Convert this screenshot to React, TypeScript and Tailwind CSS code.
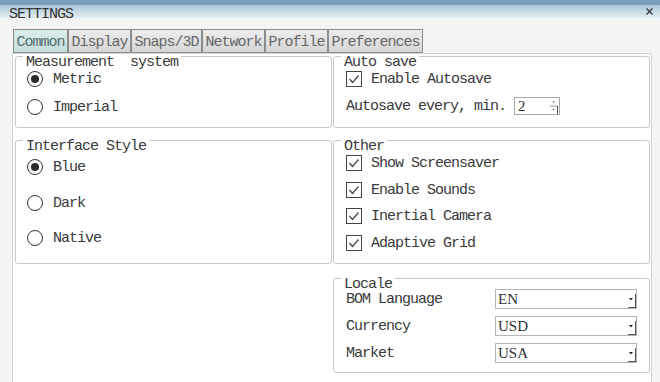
import type { ReactNode } from 'react';

const mono = "font-['Liberation_Mono',monospace] text-[15px] tracking-[-1px]";

function Radio({ checked }: { checked?: boolean }) {
  return (
    <span className="w-[16px] h-[16px] rounded-full border-[1.5px] border-[#333] bg-white flex items-center justify-center shrink-0">
      {checked && <span className="w-[8px] h-[8px] rounded-full bg-[#2a2a2a]" />}
    </span>
  );
}

function Check() {
  return (
    <span className="w-[16px] h-[16px] border-[1.5px] border-[#444] bg-white flex items-center justify-center shrink-0">
      <svg width="12" height="12" viewBox="0 0 12 12">
        <polyline points="1.5,6 4.5,9.5 10.5,2.5" fill="none" stroke="#444" strokeWidth="1.2" />
      </svg>
    </span>
  );
}

function GroupBox({ title, className, children }: { title: string; className: string; children: ReactNode }) {
  return (
    <div className={`border border-[#c8c8c8] rounded-[3px] bg-white ${className}`}>
      <div className="-mt-px pl-[7px] h-[13px] leading-[14px]">
        <span className="bg-white px-[3px] text-[#3a3a3a] whitespace-pre">{title}</span>
      </div>
      {children}
    </div>
  );
}

function RadioRow({ label, checked }: { label: string; checked?: boolean }) {
  return (
    <div className="h-[20px] flex items-center gap-[10px] pl-[11px]">
      <Radio checked={checked} />
      <span className="pt-[3px] text-[#3a3a3a]">{label}</span>
    </div>
  );
}

function CheckRow({ label }: { label: string }) {
  return (
    <div className="h-[20px] flex items-center gap-[9px] pl-[12px]">
      <Check />
      <span className="pt-[3px] text-[#3a3a3a]">{label}</span>
    </div>
  );
}

function Select({ value }: { value: string }) {
  return (
    <div className="w-[142px] h-[20px] border border-[#b4b4b4] bg-white flex items-center">
      <span className="pl-[2px] pt-[1px] font-['Liberation_Serif',serif] text-[15px] tracking-normal text-[#333] leading-none">
        {value}
      </span>
      <svg className="ml-auto" width="10" height="18" viewBox="0 0 10 18">
        <line x1="9.5" y1="4" x2="9.5" y2="18" stroke="#555" strokeWidth="1" />
        <line x1="2" y1="17.5" x2="10" y2="17.5" stroke="#555" strokeWidth="1" />
        <polygon points="3,8 7,8 5,10.5" fill="#222" />
      </svg>
    </div>
  );
}

export default function App() {
  const tabs = ['Common', 'Display', 'Snaps/3D', 'Network', 'Profile', 'Preferences'];

  return (
    <div className={`w-[660px] h-[382px] overflow-hidden bg-[#f4f4f4] flex flex-col ${mono}`}>
      {/* title bar */}
      <div className="h-[5px] bg-[#7a9ebd]" />
      <div className="h-[13px] overflow-hidden bg-gradient-to-b from-[#aac7da] to-[#e3edf2] flex items-start">
        <span className="pl-[9px] pt-[2px] text-[#333] leading-[15px]">SETTINGS</span>
        <svg className="ml-auto mr-[7px] mt-[3px]" width="7" height="7" viewBox="0 0 7 7">
          <line x1="0.5" y1="0.5" x2="6.5" y2="6.5" stroke="#333" strokeWidth="1.3" />
          <line x1="6.5" y1="0.5" x2="0.5" y2="6.5" stroke="#333" strokeWidth="1.3" />
        </svg>
      </div>

      {/* tabs */}
      <div className="mt-[11px] ml-[13px] flex h-[24px]">
        {tabs.map((t, i) => (
          <div
            key={t}
            className={`h-[24px] px-[2.5px] pt-[2px] border border-[#8c8c8c] flex items-center leading-none ${
              i === 0
                ? 'bg-gradient-to-b from-[#dcedeb] to-[#c7dedc] text-[#4f6e6e]'
                : 'bg-gradient-to-b from-[#ededed] to-[#d5d5d5] text-[#666]'
            }`}
          >
            {t}
          </div>
        ))}
      </div>

      {/* panel */}
      <div className="flex-1 ml-[12px] w-[640px] bg-white border-l border-t border-r border-[#d2d2d2] pt-[2px] pl-[2px] flex gap-[1px]">
        {/* left column */}
        <div className="w-[317px] flex flex-col gap-[12px]">
          <GroupBox title="Measurement  system" className="h-[72px]">
            <RadioRow label="Metric" checked />
            <div className="mt-[8px]">
              <RadioRow label="Imperial" />
            </div>
          </GroupBox>
          <GroupBox title="Interface Style" className="h-[124px]">
            <div className="mt-[4px] flex flex-col gap-[15.5px]">
              <RadioRow label="Blue" checked />
              <RadioRow label="Dark" />
              <RadioRow label="Native" />
            </div>
          </GroupBox>
        </div>

        {/* right column */}
        <div className="w-[317px] flex flex-col">
          <GroupBox title="Auto save" className="h-[72px]">
            <CheckRow label="Enable Autosave" />
            <div className="mt-[7px] h-[20px] pl-[12px] flex items-center">
              <span className="pt-[3px] text-[#3a3a3a] w-[168px]">Autosave every, min.</span>
              <div className="w-[46px] h-[18px] border border-[#a8a8a8] bg-white flex items-center">
                <span className="pl-[3px] pt-[1px] font-['Liberation_Serif',serif] tracking-normal text-[#333] leading-none">2</span>
                <svg className="ml-auto mr-[1px]" width="9" height="16" viewBox="0 0 9 16">
                  <line x1="1" y1="8" x2="9" y2="8" stroke="#999" strokeWidth="1" />
                  <line x1="8.5" y1="8" x2="8.5" y2="16" stroke="#555" strokeWidth="1" />
                  <polygon points="3.5,4.5 5.5,4.5 4.5,3" fill="#333" />
                  <polygon points="3.5,11 5.5,11 4.5,12.5" fill="#333" />
                </svg>
              </div>
            </div>
          </GroupBox>

          <GroupBox title="Other" className="h-[124px] mt-[12px]">
            <div className="flex flex-col gap-[6.5px]">
              <CheckRow label="Show Screensaver" />
              <CheckRow label="Enable Sounds" />
              <CheckRow label="Inertial Camera" />
              <CheckRow label="Adaptive Grid" />
            </div>
          </GroupBox>

          <GroupBox title="Locale" className="h-[95px] mt-[14px]">
            <div className="-mt-[2px] flex flex-col gap-[7px] pl-[12px]">
              {[
                ['BOM Language', 'EN'],
                ['Currency', 'USD'],
                ['Market', 'USA'],
              ].map(([label, value]) => (
                <div key={label} className="h-[20px] flex items-center">
                  <span className="pt-[3px] w-[149px] text-[#3a3a3a]">{label}</span>
                  <Select value={value} />
                </div>
              ))}
            </div>
          </GroupBox>
        </div>
      </div>
    </div>
  );
}
